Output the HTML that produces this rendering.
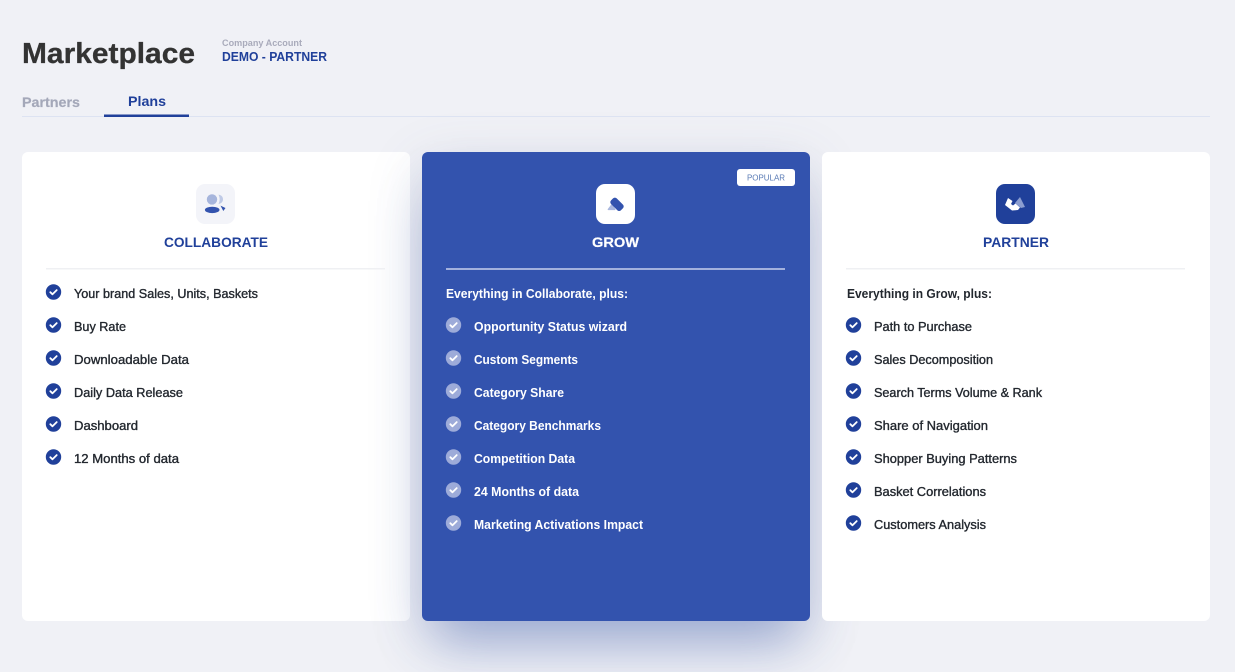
<!DOCTYPE html>
<html><head><meta charset="utf-8"><title>Marketplace</title>
<style>
html,body{margin:0;padding:0}
body{width:1235px;height:672px;overflow:hidden;background:#f0f1f6;position:relative;font-family:"Liberation Sans",sans-serif}
.card{position:absolute;top:152px;width:388px;height:469px;border-radius:6px;background:#fff}
svg{position:absolute;left:0;top:0}
text{font-family:"Liberation Sans",sans-serif}
.d{fill:#23282f;stroke:#23282f}
</style></head><body>
<div class="card" style="left:22px"></div>
<div class="card" style="left:422px;background:#3353ae;box-shadow:0 34px 50px -12px rgba(51,83,174,.38),0 14px 56px rgba(90,100,140,.17)"></div>
<div class="card" style="left:822px"></div>
<svg width="1235" height="672" viewBox="0 0 1235 672" xmlns="http://www.w3.org/2000/svg">
<defs>
<g id="c"><circle cx="0" cy="0" r="7.7" fill="#20409a"/><path d="M-3.2 .2L-1 2.3L3.2-1.9" fill="none" stroke="#fff" stroke-width="1.8" stroke-linecap="round" stroke-linejoin="round"/></g>
<g id="l"><circle cx="0" cy="0" r="7.7" fill="#9dabd9"/><path d="M-3.2 .2L-1 2.3L3.2-1.9" fill="none" stroke="#fff" stroke-width="1.8" stroke-linecap="round" stroke-linejoin="round"/></g>
</defs>
<text x="22" y="63" font-size="29" font-weight="700" fill="#333" stroke="#333" stroke-width=".3" textLength="173" lengthAdjust="spacingAndGlyphs">Marketplace</text>
<text x="222" y="46" font-size="9" font-weight="700" fill="#a9abbb" textLength="80" lengthAdjust="spacingAndGlyphs">Company Account</text>
<text x="222" y="61" font-size="12.5" font-weight="700" fill="#20409a" textLength="105" lengthAdjust="spacingAndGlyphs">DEMO - PARTNER</text>
<text x="22" y="107" font-size="14" font-weight="700" fill="#a4a8b9" stroke="#a4a8b9" stroke-width=".2" textLength="58" lengthAdjust="spacingAndGlyphs">Partners</text>
<text x="128" y="106" font-size="14" font-weight="700" fill="#20409a" textLength="38" lengthAdjust="spacingAndGlyphs">Plans</text>
<rect x="22" y="116" width="1188" height="1" fill="#dde3f2"/>
<rect x="104" y="114.5" width="85" height="2.5" fill="#20409a"/>

<rect x="196" y="184" width="39" height="40" rx="9" fill="#f3f4f9"/>
<circle cx="212" cy="199.4" r="5.2" fill="#a6b5dc"/>
<path d="M218.5 194.6C221.5 195 223 197 223 199.3C223 201.7 221.5 203.6 218.5 204C220 201 220 197.6 218.5 194.6z" fill="#bfcae6"/>
<ellipse cx="212.2" cy="209.9" rx="7.3" ry="3.2" fill="#3353ae"/>
<path d="M220.5 205.6l5 2.4l-2.2 3z" fill="#3353ae"/>
<text x="164" y="247" font-size="14" font-weight="700" fill="#20409a" textLength="104" lengthAdjust="spacingAndGlyphs">COLLABORATE</text>
<rect x="46" y="268" width="339" height="1.5" fill="#eff0f3"/>

<rect x="596" y="184" width="39" height="40" rx="9" fill="#fff"/>
<path d="M612 203.5l3.4 5.6a.6.6 0 0 1-.5 1h-6.6a.7.7 0 0 1-.6-1z" fill="#a9b7de"/>
<rect x="610" y="200.3" width="14" height="8" rx="2.6" transform="rotate(45 617 204.3)" fill="#3353ae"/>
<text x="592" y="247" font-size="14" font-weight="700" fill="#fff" stroke="#fff" stroke-width=".2" textLength="47" lengthAdjust="spacingAndGlyphs">GROW</text>
<rect x="446" y="268" width="339" height="2" fill="#a3b1dd"/>
<rect x="737" y="169" width="58" height="17" rx="3" fill="#fff"/>
<text x="747" y="180.5" font-size="8" fill="#5a7bb5" textLength="38" lengthAdjust="spacingAndGlyphs">POPULAR</text>

<rect x="996" y="184" width="39" height="40" rx="9" fill="#20409a"/>
<path d="M1020 197l5 10l-4 1l-6-5z" fill="#8b9dd0"/>
<path d="M1008 198l4.5 3l-1.5 3l2 1.5l2.5-2l4.5 4l-2 2.5l-6 .5l-7-5.5z" fill="#fff"/>
<text x="983" y="247" font-size="14" font-weight="700" fill="#20409a" textLength="66" lengthAdjust="spacingAndGlyphs">PARTNER</text>
<rect x="846" y="268" width="339" height="1.5" fill="#eff0f3"/>

<use href="#c" x="53.5" y="292"/><use href="#c" x="53.5" y="325"/><use href="#c" x="53.5" y="358"/><use href="#c" x="53.5" y="391"/><use href="#c" x="53.5" y="424"/><use href="#c" x="53.5" y="457"/>
<g class="d" font-size="12.5" stroke-width=".35">
<text x="74" y="298" textLength="184" lengthAdjust="spacingAndGlyphs">Your brand Sales, Units, Baskets</text>
<text x="74" y="331" textLength="52" lengthAdjust="spacingAndGlyphs">Buy Rate</text>
<text x="74" y="364" textLength="115" lengthAdjust="spacingAndGlyphs">Downloadable Data</text>
<text x="74" y="397" textLength="109" lengthAdjust="spacingAndGlyphs">Daily Data Release</text>
<text x="74" y="430" textLength="64" lengthAdjust="spacingAndGlyphs">Dashboard</text>
<text x="74" y="463" textLength="105" lengthAdjust="spacingAndGlyphs">12 Months of data</text>
</g>

<use href="#l" x="453.5" y="325"/><use href="#l" x="453.5" y="358"/><use href="#l" x="453.5" y="391"/><use href="#l" x="453.5" y="424"/><use href="#l" x="453.5" y="457"/><use href="#l" x="453.5" y="490"/><use href="#l" x="453.5" y="523"/>
<g font-size="12.5" font-weight="700" fill="#fff">
<text x="446" y="298" textLength="182" lengthAdjust="spacingAndGlyphs">Everything in Collaborate, plus:</text>
<text x="474" y="331" textLength="153" lengthAdjust="spacingAndGlyphs">Opportunity Status wizard</text>
<text x="474" y="364" textLength="104" lengthAdjust="spacingAndGlyphs">Custom Segments</text>
<text x="474" y="397" textLength="90" lengthAdjust="spacingAndGlyphs">Category Share</text>
<text x="474" y="430" textLength="127" lengthAdjust="spacingAndGlyphs">Category Benchmarks</text>
<text x="474" y="463" textLength="101" lengthAdjust="spacingAndGlyphs">Competition Data</text>
<text x="474" y="496" textLength="105" lengthAdjust="spacingAndGlyphs">24 Months of data</text>
<text x="474" y="529" textLength="169" lengthAdjust="spacingAndGlyphs">Marketing Activations Impact</text>
</g>

<use href="#c" x="853.5" y="325"/><use href="#c" x="853.5" y="358"/><use href="#c" x="853.5" y="391"/><use href="#c" x="853.5" y="424"/><use href="#c" x="853.5" y="457"/><use href="#c" x="853.5" y="490"/><use href="#c" x="853.5" y="523"/>
<text x="847" y="298" font-size="12.5" font-weight="700" fill="#23282f" textLength="145" lengthAdjust="spacingAndGlyphs">Everything in Grow, plus:</text>
<g class="d" font-size="12.5" stroke-width=".35">
<text x="874" y="331" textLength="98" lengthAdjust="spacingAndGlyphs">Path to Purchase</text>
<text x="874" y="364" textLength="119" lengthAdjust="spacingAndGlyphs">Sales Decomposition</text>
<text x="874" y="397" textLength="168" lengthAdjust="spacingAndGlyphs">Search Terms Volume &amp; Rank</text>
<text x="874" y="430" textLength="114" lengthAdjust="spacingAndGlyphs">Share of Navigation</text>
<text x="874" y="463" textLength="143" lengthAdjust="spacingAndGlyphs">Shopper Buying Patterns</text>
<text x="874" y="496" textLength="112" lengthAdjust="spacingAndGlyphs">Basket Correlations</text>
<text x="874" y="529" textLength="112" lengthAdjust="spacingAndGlyphs">Customers Analysis</text>
</g>
</svg>
</body></html>
